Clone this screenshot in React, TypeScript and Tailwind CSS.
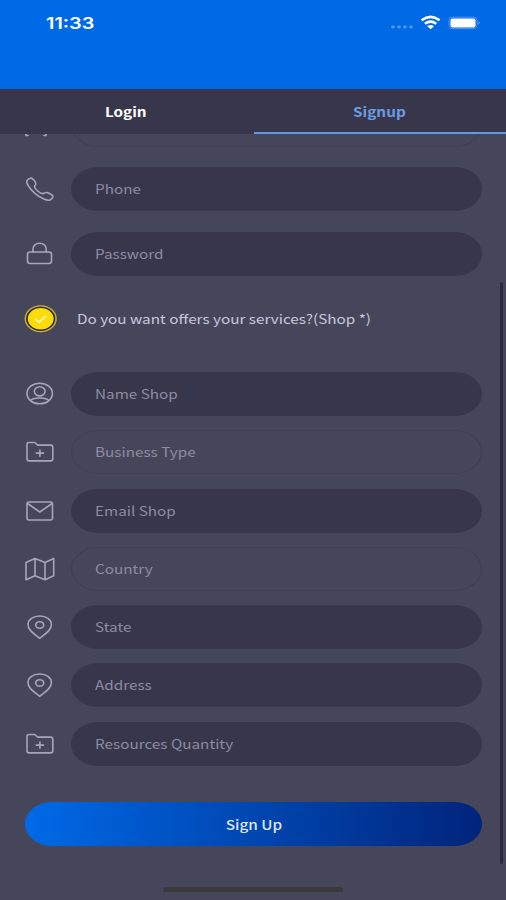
import { ReactNode } from "react";

const fontFamily = "font-['Noto_Sans_CJK_SC','Noto_Sans',sans-serif]";

type IconProps = { children: ReactNode };

const Icon = ({ children }: IconProps) => (
    <svg
        viewBox="0 0 32 28"
        className="h-7 w-8 shrink-0 fill-none stroke-[#a5a5bc]"
        strokeWidth="1.6"
        strokeLinecap="round"
        strokeLinejoin="round"
    >
        {children}
    </svg>
);

const PhoneIcon = () => (
    <Icon>
        <path
            transform="translate(-0.3 0.4) scale(0.0635 0.0535)"
            vectorEffect="non-scaling-stroke"
            d="M451 374c-15.88-16-54.34-39.35-73-48.76-24.3-12.24-26.3-13.24-45.4.95-12.74 9.47-21.21 17.93-36.12 14.75s-47.31-21.11-75.68-49.39-47.34-61.62-50.53-76.48 5.41-23.23 14.79-36c13.22-18 12.22-21 .92-45.3-8.81-18.9-32.84-57-48.9-72.8C119.9 44 119.9 47 108.83 51.6A160.15 160.15 0 0083 65.37C67 76 58.12 84.83 51.91 98.1s-9 44.38 23.07 102.64 54.57 88.05 101.14 134.49S258.5 406.64 310.85 436c64.76 36.27 89.6 29.2 102.91 23s22.18-15 32.83-31a159.09 159.09 0 0013.8-25.8C465 391.17 468 391.17 451 374z"
        />
    </Icon>
);

const LockIcon = () => (
    <Icon>
        <rect x="3.5" y="12" width="24" height="11.5" rx="2.5" />
        <path d="M9 12V8.700a6.600 5.400 0 0 1 13.200 0V12" />
    </Icon>
);

const UserIcon = () => (
    <Icon>
        <ellipse cx="15.7" cy="13.5" rx="12.7" ry="10.3" />
        <ellipse cx="15.7" cy="11.3" rx="5.4" ry="4.600" />
        <path d="M6.500 20.300c2-1.700 5.200-2.300 9.200-2.300s7.200.6 9.200 2.300" />
    </Icon>
);

const FolderIcon = () => (
    <Icon>
        <path d="M3 6Q3 4.500 5 4.500h5.700l3 2.600h12.800q2.300 0 2.300 1.900v12q0 1.900-2.300 1.900H5.200Q3 22.900 3 21z" />
        <path d="M15.900 12v6.200M12.300 15.100h7.200" />
    </Icon>
);

const MailIcon = () => (
    <Icon>
        <rect x="3" y="5" width="25.500" height="18" rx="2" />
        <path d="M3.500 6.500l12.300 8.500 12.300-8.500" />
    </Icon>
);

const MapIcon = () => (
    <Icon>
        <path d="M2 7.500l9-4 10 4 8.700-4v17.300l-8.700 4-10-4-9 4zM11 3.500v17.300M21 7.500v17.300" />
    </Icon>
);

const PinIcon = () => (
    <Icon>
        <path d="M15.700 25.300C10.700 21.300 4 17.600 4 11.800 4 6.600 9.200 3 15.700 3s11.700 3.600 11.700 8.800c0 5.800-6.700 9.500-11.700 13.500z" />
        <ellipse cx="15.700" cy="12" rx="4" ry="3.300" />
    </Icon>
);

// only the bottom edge is visible below the tabs
const ScanIcon = () => (
    <Icon>
        <path d="M2 22v2.500h2M20 24.500h2V22" />
    </Icon>
);

type FieldProps = {
    icon: ReactNode;
    label: string;
    outlined?: boolean;
};

const Field = ({ icon, label, outlined }: FieldProps) => (
    <div className="flex h-11 shrink-0 items-center">
        {icon}
        <div
            className={`ml-[15px] flex h-11 flex-1 items-center rounded-[27px/22px] ${
                outlined ? "border border-[#3f3e53] pl-[22.500px]" : "bg-[#38364a] pl-[23.500px]"
            }`}
        >
            <span className="origin-left scale-x-[1.175] text-[13px] leading-5 whitespace-nowrap text-[#8c8ca4]">{label}</span>
        </div>
    </div>
);

const StatusBar = () => (
    <header className="flex h-[89px] shrink-0 justify-between bg-[#0069e6] pt-3 pr-[25px] pl-[46px]">
        <span className="h-6 origin-left scale-x-[1.240] font-[Inter] text-[16px] leading-[23px] font-semibold text-white">11:33</span>
        <svg viewBox="0 0 92 24" className="h-6 w-[92px] fill-white">
            <g className="fill-[#5196f1]">
                <ellipse cx="4" cy="15" rx="1.900" ry="1.400" />
                <ellipse cx="10" cy="15" rx="1.900" ry="1.400" />
                <ellipse cx="16" cy="15" rx="1.900" ry="1.400" />
                <ellipse cx="22" cy="15" rx="1.900" ry="1.400" />
            </g>
            <g className="fill-none stroke-white" strokeWidth="2.500">
                <path d="M32.600 8.300q9-6.800 18 0" />
                <path d="M35.900 11.700q5.700-4.200 11.400 0" />
            </g>
            <path d="M38.200 14.200q3.400-2.400 6.800 0l-3.400 3z" />
            <rect x="60" y="5.200" width="28" height="11.500" rx="3.500" className="fill-none stroke-[#4f97f3]" />
            <rect x="61.500" y="6.500" width="25" height="9" rx="2" />
            <path d="M89.500 9.200q2 1.700 0 3.500z" className="fill-[#8fbef9]" />
        </svg>
    </header>
);

const Tabs = () => (
    <nav className="flex h-[45px] shrink-0 bg-[#38364a] text-[13px] font-bold">
        <div className="flex flex-1 items-center justify-center text-white">
            <span className="scale-x-[1.175]">Login</span>
        </div>
        <div className="ml-px flex flex-1 items-center justify-center border-b-2 border-[#6595de] pt-0.5 text-[#6d9be3]">
            <span className="scale-x-[1.175]">Signup</span>
        </div>
    </nav>
);

const App = () => {
    return (
        <div className={`flex h-[900px] w-[506px] flex-col overflow-hidden bg-[#46465b] ${fontFamily}`}>
            <StatusBar />
            <Tabs />
            <main className="relative flex flex-1 flex-col overflow-hidden pr-6 pl-6">
                <div className="-mt-[31px] mb-5">
                    <Field icon={<ScanIcon />} label="" outlined />
                </div>
                <div className="flex flex-col gap-[20.500px]">
                    <Field icon={<PhoneIcon />} label="Phone" />
                    <Field icon={<LockIcon />} label="Password" />
                </div>
                <div className="mt-5 mb-[30.600px] flex h-[46px] items-center">
                    <svg viewBox="0 0 34 28" className="h-7 w-[34px] fill-none">
                        <ellipse cx="16.700" cy="13.700" rx="15.400" ry="12.900" stroke="#d5b526" strokeWidth="1.300" />
                        <ellipse cx="16.700" cy="13.700" rx="13.600" ry="11.400" fill="#fbdc04" stroke="#2e2c3c" strokeWidth="1.300" />
                        <path d="M11.300 13.900l3.700 3.300 7-6.500" stroke="#fff4b0" strokeWidth="1.900" />
                    </svg>
                    <span className="ml-[18.500px] origin-left scale-x-[1.175] text-[13px] leading-5 whitespace-nowrap text-[#c9c9db]">
                        Do you want offers your services?(Shop *)
                    </span>
                </div>
                <div className="flex flex-col gap-[14.250px]">
                    <Field icon={<UserIcon />} label="Name Shop" />
                    <Field icon={<FolderIcon />} label="Business Type" outlined />
                    <Field icon={<MailIcon />} label="Email Shop" />
                    <Field icon={<MapIcon />} label="Country" outlined />
                    <Field icon={<PinIcon />} label="State" />
                    <Field icon={<PinIcon />} label="Address" />
                    <Field icon={<FolderIcon />} label="Resources Quantity" />
                </div>
                <button className="mt-9 ml-px flex h-11 shrink-0 items-center justify-center rounded-[27px/22px] bg-linear-to-r from-[#006ae8] to-[#00247c] pt-0.5 text-[13px] font-medium text-[#dfe6fb]">
                    <span className="scale-x-[1.180]">Sign Up</span>
                </button>
                <div className="mx-auto mt-[41px] h-[5px] w-[180px] shrink-0 rounded-sm bg-[#3a3a3e]" />
                <div className="absolute top-[148px] right-[3px] h-[582px] w-[3px] rounded-full bg-[#2b2a3e]" />
            </main>
        </div>
    );
};

export default App;
